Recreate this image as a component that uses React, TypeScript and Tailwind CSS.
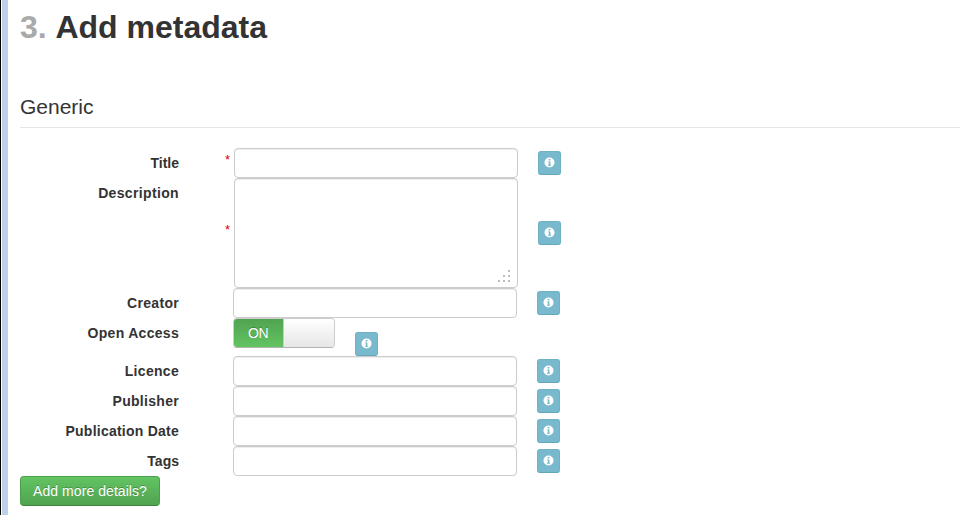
type Field = {
  label: string;
  text: string;
  kind?: "area" | "switch";
  required?: boolean;
};

const fields: Field[] = [
  { label: "Title", text: "pr-px tracking-normal", required: true },
  { label: "Description", text: "pr-px tracking-[0.35px]", kind: "area", required: true },
  { label: "Creator", text: "pr-px tracking-[0.3px]" },
  { label: "Open Access", text: "pr-px tracking-[0.3px]", kind: "switch" },
  { label: "Licence", text: "pr-px tracking-[0.3px]" },
  { label: "Publisher", text: "pr-px tracking-[0.3px]" },
  { label: "Publication Date", text: "pr-px tracking-[0.24px]" },
  { label: "Tags", text: "pr-px tracking-normal" },
];

function InfoButton({ className }: { className: string }) {
  return (
    <button
      type="button"
      aria-label="Info"
      className={`flex h-6 w-[23px] shrink-0 justify-center rounded-[3px] border border-[#6fb2c6] border-b-[#65a6ba] bg-[#79b9cd] pt-[5px] ${className}`}
    >
      <svg width="11" height="11" viewBox="0 0 11 11">
        <circle cx="5.5" cy="5.5" r="5" fill="white" />
        <path d="M4.7 2h1.7v1.4H4.7zM4 4.4h2.4v3.3H7v1H4v-1h.8V5.3H4z" fill="#79b9cd" />
      </svg>
    </button>
  );
}

function Grip() {
  return (
    <svg className="absolute right-[7px] bottom-[5px]" width="12" height="12" viewBox="0 0 12 12" fill="#bcbcbc">
      <path d="M10 0h2v2h-2zM5 5h2v2H5zM10 5h2v2h-2zM0 10h2v2H0zM5 10h2v2H5zM10 10h2v2h-2z" />
    </svg>
  );
}

function Toggle() {
  return (
    <div className="ml-[53px] flex h-[30px] w-[102px] overflow-hidden rounded-[4px] border border-[#cccccc] border-b-[#b3b3b3]">
      <span className="w-[49px] bg-linear-to-b from-[#51a351] to-[#62c462] pl-[14px] text-[14px] leading-[28px] tracking-[-0.3px] text-white [text-shadow:0_-1px_0_rgba(0,0,0,0.25)]">
        ON
      </span>
      <span className="flex-1 border-l border-[#cccccc] bg-linear-to-b from-white to-[#e6e6e6]" />
    </div>
  );
}

function Row({ field }: { field: Field }) {
  const area = field.kind === "area";
  const toggle = field.kind === "switch";
  const height = area ? "h-[110px]" : toggle ? "h-[38px]" : "h-[30px]";
  return (
    <div className={`flex ${height}`}>
      <label className={`w-40 shrink-0 text-right text-[14px] leading-[30px] font-bold ${field.text}`}>
        {field.label}
      </label>
      {toggle ? (
        <>
          <Toggle />
          <InfoButton className="mt-[14px] ml-5" />
        </>
      ) : (
        <>
          <span
            className={`shrink-0 pr-1 text-right text-[13px] leading-[26px] text-[#e00000] ${
              field.required ? "w-[54px]" : "w-[53px]"
            } ${area ? "pt-[39px]" : "-mt-px"}`}
          >
            {field.required ? "*" : null}
          </span>
          <div className="relative h-full w-[284px] shrink-0 rounded-[4px] border border-[#cccccc] bg-white shadow-[inset_0_1px_1px_rgba(0,0,0,0.075)]">
            {area && <Grip />}
          </div>
          <InfoButton className={area ? "mt-[43px] ml-5" : "mt-[3px] ml-5"} />
        </>
      )}
    </div>
  );
}

export default function App() {
  return (
    <div className="flex h-[515px] w-[970px] overflow-hidden bg-white font-['Liberation_Sans',Arial,sans-serif] text-[#333333]">
      <div className="w-px shrink-0 bg-black" />
      <div className="ml-px w-[6px] shrink-0 bg-[#bad1e9]" />
      <main className="ml-3 w-[940px]">
        <h1 className="h-[92px] pt-[7px] text-[32px] leading-[40px] font-bold whitespace-pre">
          <span className="mr-px text-[#aaaaaa]">3.</span> Add metadata
        </h1>
        <h2 className="h-9 border-b border-[#e5e5e5] text-[21px] leading-[30px]">Generic</h2>
        <form className="pt-5">
          {fields.map((field) => (
            <Row key={field.label} field={field} />
          ))}
        </form>
        <button
          type="button"
          className="block h-[30px] w-[140px] rounded-[4px] border border-[#4aa04a] border-b-[#3d853d] bg-linear-to-b from-[#62c462] to-[#51a351] text-[14px] leading-[28px] tracking-[0.06px] whitespace-nowrap text-white [text-shadow:0_-1px_0_rgba(0,0,0,0.25)]"
        >
          Add more details?
        </button>
      </main>
    </div>
  );
}
